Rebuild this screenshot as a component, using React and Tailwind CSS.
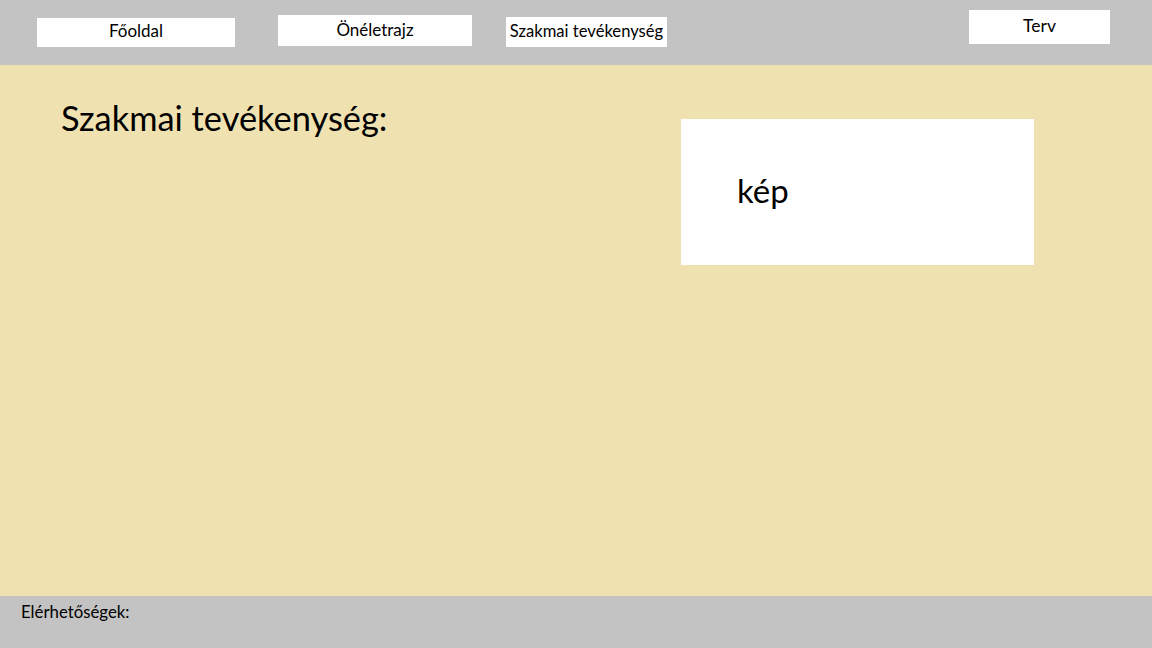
export default function App() {
  return (
    <div className="w-[1152px] h-[648px] flex flex-col text-black font-['Lato',sans-serif]">
      <header className="h-[65px] bg-[#c3c3c3] flex items-start shrink-0">
        <div className="ml-[37px] mt-[18px] w-[198px] h-[29px] bg-white flex items-center justify-center pb-[3px] text-[17px]">Főoldal</div>
        <div className="ml-[43px] mt-[15px] w-[194px] h-[31px] bg-white flex items-center justify-center pb-[1px] text-[17px]">Önéletrajz</div>
        <div className="ml-[34px] mt-[17px] w-[161px] h-[30px] bg-white flex items-center justify-center pb-[1px] text-[16.6px] whitespace-nowrap">Szakmai tevékenység</div>
        <div className="ml-[302px] mt-[10px] w-[141px] h-[34px] bg-white flex items-center justify-center pb-[2px] text-[17.5px]">Terv</div>
      </header>
      <main className="h-[531px] bg-[#efe2b0] flex items-start shrink-0">
        <h1 className="ml-[61px] mt-[33px] text-[34.4px] leading-[40px] w-[559px] whitespace-nowrap">Szakmai tevékenység:</h1>
        <div className="ml-[61px] mt-[54px] w-[353px] h-[146px] bg-white flex items-center pl-[56px] pb-[2px] text-[33px]">kép</div>
      </main>
      <footer className="h-[52px] bg-[#c3c3c3] px-[21px] pt-[3px] text-[16.8px] shrink-0">Elérhetőségek:</footer>
    </div>
  );
}
